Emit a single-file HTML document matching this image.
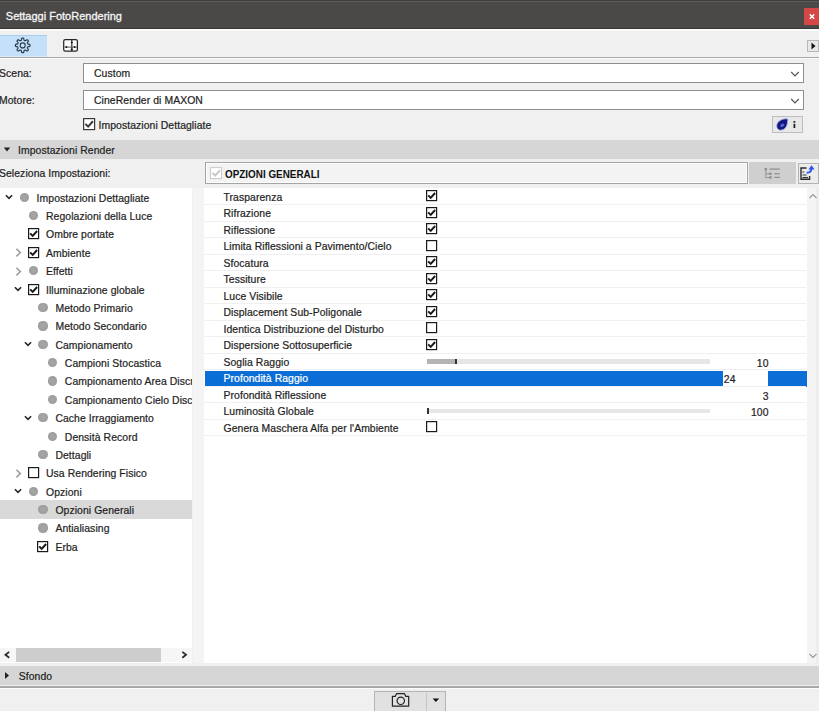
<!DOCTYPE html>
<html><head><meta charset="utf-8"><style>
html,body{margin:0;padding:0;}
body{width:819px;height:711px;overflow:hidden;position:relative;background:#f0f0f0;font-family:"Liberation Sans",sans-serif;}
.t{position:absolute;white-space:nowrap;-webkit-text-stroke:0.22px currentColor;}
</style></head><body>
<div style="position:absolute;left:0px;top:0px;width:819px;height:29px;background:#4b4947"></div>
<div style="position:absolute;left:0px;top:0px;width:819px;height:1px;background:#3f3d3b"></div>
<div style="position:absolute;left:0px;top:1px;width:819px;height:1px;background:#5e5c5a"></div>
<div style="position:absolute;left:0px;top:28px;width:819px;height:1px;background:#393735"></div>
<div class="t" style="left:5.8px;top:9.96px;font-size:11px;line-height:12.65px;color:#f6f6f6;font-weight:normal;letter-spacing:0.08px;letter-spacing:0;-webkit-text-stroke:0.3px #f6f6f6">Settaggi FotoRendering</div>
<div style="position:absolute;left:804px;top:8px;width:15px;height:17px;background:#d44747"></div>
<svg style="position:absolute;left:804px;top:8px" width="15" height="17"><path d="M5.8,6.4 L10.2,10.8 M10.2,6.4 L5.8,10.8" stroke="#fff" stroke-width="1.5"/></svg>
<div style="position:absolute;left:0px;top:29px;width:819px;height:2px;background:#fbfbfb"></div>
<div style="position:absolute;left:0px;top:35px;width:46.5px;height:21px;background:#c5e1f9"></div>
<div style="position:absolute;left:0px;top:35px;width:46.5px;height:1px;background:#a9cdec"></div>
<div style="position:absolute;left:0px;top:55.5px;width:46.5px;height:1px;background:#dce9f3"></div>
<svg style="position:absolute;left:0;top:0" width="100" height="70"><path d="M22.70,38.10 L22.99,38.11 L23.27,38.16 L23.54,38.27 L23.78,38.60 L23.92,39.27 L24.01,39.94 L24.15,40.28 L24.32,40.42 L24.50,40.52 L24.69,40.60 L24.88,40.67 L25.08,40.74 L25.30,40.75 L25.63,40.61 L26.17,40.20 L26.75,39.83 L27.14,39.77 L27.42,39.87 L27.65,40.04 L27.86,40.24 L28.06,40.45 L28.23,40.68 L28.33,40.96 L28.27,41.35 L27.90,41.93 L27.49,42.47 L27.35,42.80 L27.36,43.02 L27.43,43.22 L27.50,43.41 L27.58,43.60 L27.68,43.78 L27.82,43.95 L28.16,44.09 L28.83,44.18 L29.50,44.32 L29.83,44.56 L29.94,44.83 L29.99,45.11 L30.00,45.40 L29.99,45.69 L29.94,45.97 L29.83,46.24 L29.50,46.48 L28.83,46.62 L28.16,46.71 L27.82,46.85 L27.68,47.02 L27.58,47.20 L27.50,47.39 L27.43,47.58 L27.36,47.78 L27.35,48.00 L27.49,48.33 L27.90,48.87 L28.27,49.45 L28.33,49.84 L28.23,50.12 L28.06,50.35 L27.86,50.56 L27.65,50.76 L27.42,50.93 L27.14,51.03 L26.75,50.97 L26.17,50.60 L25.63,50.19 L25.30,50.05 L25.08,50.06 L24.88,50.13 L24.69,50.20 L24.50,50.28 L24.32,50.38 L24.15,50.52 L24.01,50.86 L23.92,51.53 L23.78,52.20 L23.54,52.53 L23.27,52.64 L22.99,52.69 L22.70,52.70 L22.41,52.69 L22.13,52.64 L21.86,52.53 L21.62,52.20 L21.48,51.53 L21.39,50.86 L21.25,50.52 L21.08,50.38 L20.90,50.28 L20.71,50.20 L20.52,50.13 L20.32,50.06 L20.10,50.05 L19.77,50.19 L19.23,50.60 L18.65,50.97 L18.26,51.03 L17.98,50.93 L17.75,50.76 L17.54,50.56 L17.34,50.35 L17.17,50.12 L17.07,49.84 L17.13,49.45 L17.50,48.87 L17.91,48.33 L18.05,48.00 L18.04,47.78 L17.97,47.58 L17.90,47.39 L17.82,47.20 L17.72,47.02 L17.58,46.85 L17.24,46.71 L16.57,46.62 L15.90,46.48 L15.57,46.24 L15.46,45.97 L15.41,45.69 L15.40,45.40 L15.41,45.11 L15.46,44.83 L15.57,44.56 L15.90,44.32 L16.57,44.18 L17.24,44.09 L17.58,43.95 L17.72,43.78 L17.82,43.60 L17.90,43.41 L17.97,43.22 L18.04,43.02 L18.05,42.80 L17.91,42.47 L17.50,41.93 L17.13,41.35 L17.07,40.96 L17.17,40.68 L17.34,40.45 L17.54,40.24 L17.75,40.04 L17.98,39.87 L18.26,39.77 L18.65,39.83 L19.23,40.20 L19.77,40.61 L20.10,40.75 L20.32,40.74 L20.52,40.67 L20.71,40.60 L20.90,40.52 L21.08,40.42 L21.25,40.28 L21.39,39.94 L21.48,39.27 L21.62,38.60 L21.86,38.27 L22.13,38.16 L22.41,38.11Z" fill="none" stroke="#2b3b4c" stroke-width="1.2" stroke-linejoin="round"/><circle cx="22.7" cy="45.4" r="2.5" fill="none" stroke="#2b3b4c" stroke-width="1.15"/><rect x="63.7" y="39.7" width="13.7" height="11.5" rx="1.6" fill="#fafafa" stroke="#262626" stroke-width="1.25"/><line x1="71.8" y1="40" x2="71.8" y2="51" stroke="#333" stroke-width="1.25"/><line x1="64.5" y1="47.1" x2="77" y2="47.1" stroke="#5a5a5a" stroke-width="1"/><ellipse cx="71.8" cy="42.5" rx="1.1" ry="0.8" fill="#111"/><ellipse cx="71.8" cy="49.4" rx="1.1" ry="0.8" fill="#111"/><ellipse cx="66.4" cy="47.1" rx="0.9" ry="1" fill="#111"/><ellipse cx="74.6" cy="47.1" rx="0.9" ry="1" fill="#111"/></svg>
<div style="position:absolute;left:807px;top:40px;width:12px;height:11.5px;background:#e8e8e8;border:1px solid #b8b8b8;box-sizing:border-box"></div>
<svg style="position:absolute;left:807px;top:40px" width="12" height="12"><path d="M4.5,2.5 L8.5,6 L4.5,9.5Z" fill="#111"/></svg>
<div style="position:absolute;left:0px;top:57px;width:819px;height:1px;background:#a9a9a9"></div>
<div style="position:absolute;left:0px;top:58px;width:819px;height:1px;background:#fafafa"></div>
<div class="t" style="left:-1px;top:68.32px;font-size:10.4px;line-height:11.96px;color:#1f1f1f;font-weight:normal;letter-spacing:0.08px;">Scena:</div>
<div style="position:absolute;left:83px;top:63px;width:720.5px;height:20px;background:#fff;border:1px solid #8e8e8e;box-sizing:border-box"></div>
<div class="t" style="left:94px;top:68.32px;font-size:10.4px;line-height:11.96px;color:#1f1f1f;font-weight:normal;letter-spacing:0.08px;">Custom</div>
<div class="t" style="left:-1px;top:95.32px;font-size:10.4px;line-height:11.96px;color:#1f1f1f;font-weight:normal;letter-spacing:0.08px;">Motore:</div>
<div style="position:absolute;left:83px;top:90px;width:720.5px;height:20px;background:#fff;border:1px solid #8e8e8e;box-sizing:border-box"></div>
<div class="t" style="left:94px;top:95.32px;font-size:10.4px;line-height:11.96px;color:#1f1f1f;font-weight:normal;letter-spacing:0.08px;">CineRender di MAXON</div>
<svg style="position:absolute;left:789.3px;top:70.3px" width="12" height="8"><path d="M2.2,2 L6,5.8 L9.8,2" fill="none" stroke="#555" stroke-width="1.2"/></svg>
<svg style="position:absolute;left:789.3px;top:97px" width="12" height="8"><path d="M2.2,2 L6,5.8 L9.8,2" fill="none" stroke="#555" stroke-width="1.2"/></svg>
<svg style="position:absolute;left:83.3px;top:117.5px" width="13" height="13"><rect x="0.6" y="0.6" width="11" height="11" fill="#fff" stroke="#3a3a3a" stroke-width="1.2"/><path d="M2.40,5.89 L5.13,8.62 L9.93,3.27" fill="none" stroke="#3a3a3a" stroke-width="2"/></svg>
<div class="t" style="left:98.5px;top:120.02px;font-size:10.4px;line-height:11.96px;color:#1f1f1f;font-weight:normal;letter-spacing:0.08px;">Impostazioni Dettagliate</div>
<div style="position:absolute;left:772px;top:115.6px;width:30.5px;height:17px;background:#e8e8e8;border:1px solid #bdbdbd;box-sizing:border-box"></div>
<svg style="position:absolute;left:772px;top:115px" width="31" height="18"><path d="M16,4.2 C13,3.2 8.2,4.3 5.6,7.8 C3.6,10.8 5,15.2 8.6,15.2 C12.2,15.2 14.6,12.2 15.2,9.2 C15.5,7.4 15.7,5.8 16,4.2 Z" fill="#13177f" stroke="#a9b3ea" stroke-width="0.9"/><ellipse cx="10.3" cy="10.3" rx="2.2" ry="1.5" fill="#5666cc" transform="rotate(-30 10.3 10.3)"/><rect x="21.5" y="8.8" width="1.8" height="4.2" fill="#222"/><rect x="21.5" y="6" width="1.8" height="1.7" fill="#222"/></svg>
<div style="position:absolute;left:0px;top:140px;width:819px;height:19px;background:#d6d6d6"></div>
<svg style="position:absolute;left:0;top:140px" width="14" height="19"><path d="M3.8,7.6 L10.2,7.6 L7,11.6Z" fill="#222"/></svg>
<div class="t" style="left:18px;top:145.22px;font-size:10.4px;line-height:11.96px;color:#1f1f1f;font-weight:normal;letter-spacing:0.08px;">Impostazioni Render</div>
<div class="t" style="left:-1px;top:168.32px;font-size:10.4px;line-height:11.96px;color:#1f1f1f;font-weight:normal;letter-spacing:0.08px;">Seleziona Impostazioni:</div>
<div style="position:absolute;left:0px;top:188px;width:191.5px;height:475px;background:#fff"></div>
<div style="position:absolute;left:0;top:0;width:191.5px;height:663px;overflow:hidden">
<div style="position:absolute;left:0px;top:500.29px;width:192px;height:18.37px;background:#d9d9d9"></div>
<svg style="position:absolute;left:4.10px;top:192.20px" width="10" height="10"><path d="M1.9,3.3 L5,6.4 L8.1,3.3" fill="none" stroke="#262626" stroke-width="1.6"/></svg>
<div style="position:absolute;left:19.75px;top:192.70px;width:9.3px;height:9.3px;border-radius:50%;background:radial-gradient(circle,#a6a6a6 0,#a2a2a2 40%,#949494 100%)"></div>
<div class="t" style="left:36.6px;top:192.72px;font-size:10.4px;line-height:11.96px;color:#1f1f1f;font-weight:normal;letter-spacing:0.08px;">Impostazioni Dettagliate</div>
<div style="position:absolute;left:29.05px;top:211.07px;width:9.3px;height:9.3px;border-radius:50%;background:radial-gradient(circle,#a6a6a6 0,#a2a2a2 40%,#949494 100%)"></div>
<div class="t" style="left:46.0px;top:211.09px;font-size:10.4px;line-height:11.96px;color:#1f1f1f;font-weight:normal;letter-spacing:0.08px;">Regolazioni della Luce</div>
<svg style="position:absolute;left:28.0px;top:228.4px" width="12" height="12"><rect x="0.6" y="0.6" width="10" height="10" fill="#fff" stroke="#1a1a1a" stroke-width="1.2"/><path d="M2.20,5.40 L4.70,7.90 L9.10,3.00" fill="none" stroke="#1a1a1a" stroke-width="2"/></svg>
<div class="t" style="left:46.0px;top:229.46px;font-size:10.4px;line-height:11.96px;color:#1f1f1f;font-weight:normal;letter-spacing:0.08px;">Ombre portate</div>
<svg style="position:absolute;left:14.20px;top:247.31px" width="10" height="10"><path d="M2.4,1.8 L6.4,5.6 L2.4,9.4" fill="none" stroke="#9c9c9c" stroke-width="1.5"/></svg>
<svg style="position:absolute;left:28.0px;top:246.8px" width="12" height="12"><rect x="0.6" y="0.6" width="10" height="10" fill="#fff" stroke="#1a1a1a" stroke-width="1.2"/><path d="M2.20,5.40 L4.70,7.90 L9.10,3.00" fill="none" stroke="#1a1a1a" stroke-width="2"/></svg>
<div class="t" style="left:46.0px;top:247.83px;font-size:10.4px;line-height:11.96px;color:#1f1f1f;font-weight:normal;letter-spacing:0.08px;">Ambiente</div>
<svg style="position:absolute;left:14.20px;top:265.68px" width="10" height="10"><path d="M2.4,1.8 L6.4,5.6 L2.4,9.4" fill="none" stroke="#9c9c9c" stroke-width="1.5"/></svg>
<div style="position:absolute;left:29.05px;top:266.18px;width:9.3px;height:9.3px;border-radius:50%;background:radial-gradient(circle,#a6a6a6 0,#a2a2a2 40%,#949494 100%)"></div>
<div class="t" style="left:46.0px;top:266.20px;font-size:10.4px;line-height:11.96px;color:#1f1f1f;font-weight:normal;letter-spacing:0.08px;">Effetti</div>
<svg style="position:absolute;left:13.40px;top:284.05px" width="10" height="10"><path d="M1.9,3.3 L5,6.4 L8.1,3.3" fill="none" stroke="#262626" stroke-width="1.6"/></svg>
<svg style="position:absolute;left:28.0px;top:283.6px" width="12" height="12"><rect x="0.6" y="0.6" width="10" height="10" fill="#fff" stroke="#1a1a1a" stroke-width="1.2"/><path d="M2.20,5.40 L4.70,7.90 L9.10,3.00" fill="none" stroke="#1a1a1a" stroke-width="2"/></svg>
<div class="t" style="left:46.0px;top:284.57px;font-size:10.4px;line-height:11.96px;color:#1f1f1f;font-weight:normal;letter-spacing:0.08px;">Illuminazione globale</div>
<div style="position:absolute;left:38.35px;top:302.92px;width:9.3px;height:9.3px;border-radius:50%;background:radial-gradient(circle,#a6a6a6 0,#a2a2a2 40%,#949494 100%)"></div>
<div class="t" style="left:55.400000000000006px;top:302.94px;font-size:10.4px;line-height:11.96px;color:#1f1f1f;font-weight:normal;letter-spacing:0.08px;">Metodo Primario</div>
<div style="position:absolute;left:38.35px;top:321.29px;width:9.3px;height:9.3px;border-radius:50%;background:radial-gradient(circle,#a6a6a6 0,#a2a2a2 40%,#949494 100%)"></div>
<div class="t" style="left:55.400000000000006px;top:321.31px;font-size:10.4px;line-height:11.96px;color:#1f1f1f;font-weight:normal;letter-spacing:0.08px;">Metodo Secondario</div>
<svg style="position:absolute;left:22.70px;top:339.16px" width="10" height="10"><path d="M1.9,3.3 L5,6.4 L8.1,3.3" fill="none" stroke="#262626" stroke-width="1.6"/></svg>
<div style="position:absolute;left:38.35px;top:339.66px;width:9.3px;height:9.3px;border-radius:50%;background:radial-gradient(circle,#a6a6a6 0,#a2a2a2 40%,#949494 100%)"></div>
<div class="t" style="left:55.400000000000006px;top:339.68px;font-size:10.4px;line-height:11.96px;color:#1f1f1f;font-weight:normal;letter-spacing:0.08px;">Campionamento</div>
<div style="position:absolute;left:47.65px;top:358.03px;width:9.3px;height:9.3px;border-radius:50%;background:radial-gradient(circle,#a6a6a6 0,#a2a2a2 40%,#949494 100%)"></div>
<div class="t" style="left:64.80000000000001px;top:358.05px;font-size:10.4px;line-height:11.96px;color:#1f1f1f;font-weight:normal;letter-spacing:0.08px;">Campioni Stocastica</div>
<div style="position:absolute;left:47.65px;top:376.40px;width:9.3px;height:9.3px;border-radius:50%;background:radial-gradient(circle,#a6a6a6 0,#a2a2a2 40%,#949494 100%)"></div>
<div class="t" style="left:64.80000000000001px;top:376.42px;font-size:10.4px;line-height:11.96px;color:#1f1f1f;font-weight:normal;letter-spacing:0.08px;">Campionamento Area Discr</div>
<div style="position:absolute;left:47.65px;top:394.77px;width:9.3px;height:9.3px;border-radius:50%;background:radial-gradient(circle,#a6a6a6 0,#a2a2a2 40%,#949494 100%)"></div>
<div class="t" style="left:64.80000000000001px;top:394.79px;font-size:10.4px;line-height:11.96px;color:#1f1f1f;font-weight:normal;letter-spacing:0.08px;">Campionamento Cielo Disc</div>
<svg style="position:absolute;left:22.70px;top:412.64px" width="10" height="10"><path d="M1.9,3.3 L5,6.4 L8.1,3.3" fill="none" stroke="#262626" stroke-width="1.6"/></svg>
<div style="position:absolute;left:38.35px;top:413.14px;width:9.3px;height:9.3px;border-radius:50%;background:radial-gradient(circle,#a6a6a6 0,#a2a2a2 40%,#949494 100%)"></div>
<div class="t" style="left:55.400000000000006px;top:413.16px;font-size:10.4px;line-height:11.96px;color:#1f1f1f;font-weight:normal;letter-spacing:0.08px;">Cache Irraggiamento</div>
<div style="position:absolute;left:47.65px;top:431.51px;width:9.3px;height:9.3px;border-radius:50%;background:radial-gradient(circle,#a6a6a6 0,#a2a2a2 40%,#949494 100%)"></div>
<div class="t" style="left:64.80000000000001px;top:431.53px;font-size:10.4px;line-height:11.96px;color:#1f1f1f;font-weight:normal;letter-spacing:0.08px;">Densità Record</div>
<div style="position:absolute;left:38.35px;top:449.88px;width:9.3px;height:9.3px;border-radius:50%;background:radial-gradient(circle,#a6a6a6 0,#a2a2a2 40%,#949494 100%)"></div>
<div class="t" style="left:55.400000000000006px;top:449.90px;font-size:10.4px;line-height:11.96px;color:#1f1f1f;font-weight:normal;letter-spacing:0.08px;">Dettagli</div>
<svg style="position:absolute;left:14.20px;top:467.75px" width="10" height="10"><path d="M2.4,1.8 L6.4,5.6 L2.4,9.4" fill="none" stroke="#9c9c9c" stroke-width="1.5"/></svg>
<svg style="position:absolute;left:28.0px;top:467.2px" width="12" height="12"><rect x="0.6" y="0.6" width="10" height="10" fill="#fff" stroke="#1a1a1a" stroke-width="1.2"/></svg>
<div class="t" style="left:46.0px;top:468.27px;font-size:10.4px;line-height:11.96px;color:#1f1f1f;font-weight:normal;letter-spacing:0.08px;">Usa Rendering Fisico</div>
<svg style="position:absolute;left:13.40px;top:486.12px" width="10" height="10"><path d="M1.9,3.3 L5,6.4 L8.1,3.3" fill="none" stroke="#262626" stroke-width="1.6"/></svg>
<div style="position:absolute;left:29.05px;top:486.62px;width:9.3px;height:9.3px;border-radius:50%;background:radial-gradient(circle,#a6a6a6 0,#a2a2a2 40%,#949494 100%)"></div>
<div class="t" style="left:46.0px;top:486.64px;font-size:10.4px;line-height:11.96px;color:#1f1f1f;font-weight:normal;letter-spacing:0.08px;">Opzioni</div>
<div style="position:absolute;left:38.35px;top:504.99px;width:9.3px;height:9.3px;border-radius:50%;background:radial-gradient(circle,#a6a6a6 0,#a2a2a2 40%,#949494 100%)"></div>
<div class="t" style="left:55.400000000000006px;top:505.01px;font-size:10.4px;line-height:11.96px;color:#1f1f1f;font-weight:normal;letter-spacing:0.08px;">Opzioni Generali</div>
<div style="position:absolute;left:38.35px;top:523.36px;width:9.3px;height:9.3px;border-radius:50%;background:radial-gradient(circle,#a6a6a6 0,#a2a2a2 40%,#949494 100%)"></div>
<div class="t" style="left:55.400000000000006px;top:523.38px;font-size:10.4px;line-height:11.96px;color:#1f1f1f;font-weight:normal;letter-spacing:0.08px;">Antialiasing</div>
<svg style="position:absolute;left:37.3px;top:540.7px" width="12" height="12"><rect x="0.6" y="0.6" width="10" height="10" fill="#fff" stroke="#1a1a1a" stroke-width="1.2"/><path d="M2.20,5.40 L4.70,7.90 L9.10,3.00" fill="none" stroke="#1a1a1a" stroke-width="2"/></svg>
<div class="t" style="left:55.400000000000006px;top:541.75px;font-size:10.4px;line-height:11.96px;color:#1f1f1f;font-weight:normal;letter-spacing:0.08px;">Erba</div>
<div style="position:absolute;left:0px;top:648px;width:191.5px;height:13.6px;background:#f6f6f6"></div>
<div style="position:absolute;left:15.5px;top:648px;width:145px;height:13.6px;background:#cdcdcd"></div>
<svg style="position:absolute;left:0;top:648px" width="192" height="14"><path d="M9.2,3.9 L5.4,6.8 L9.2,9.7" fill="none" stroke="#2a2a2a" stroke-width="1.7"/><path d="M182.3,3.9 L186.1,6.8 L182.3,9.7" fill="none" stroke="#2a2a2a" stroke-width="1.7"/></svg>
</div>
<div style="position:absolute;left:205px;top:162px;width:543px;height:22px;background:#f3f3f3;border:1px solid #a4a4a4;box-sizing:border-box;box-shadow:inset 0 0 0 1px #fff"></div>
<svg style="position:absolute;left:209.5px;top:167.2px" width="13" height="13"><rect x="0.6" y="0.6" width="11" height="11" fill="#fff" stroke="#c8c8c8" stroke-width="1"/><path d="M2.40,5.89 L5.13,8.62 L9.93,3.27" fill="none" stroke="#c8c8c8" stroke-width="2"/></svg>
<div class="t" style="left:224.5px;top:168.24px;font-size:10.7px;line-height:12.305px;color:#111;font-weight:bold;letter-spacing:0.08px;letter-spacing:0;-webkit-text-stroke:0;transform:scaleX(0.925);transform-origin:0 0">OPZIONI GENERALI</div>
<div style="position:absolute;left:749px;top:162px;width:46.5px;height:22px;background:#cfcfcf"></div>
<svg style="position:absolute;left:749px;top:162px" width="47" height="22"><g fill="#8e8e8e"><rect x="15.6" y="6" width="2.4" height="2.4"/><rect x="20.5" y="6.5" width="10.3" height="1.2"/><rect x="16.4" y="8.2" width="0.9" height="8.3"/><rect x="17.2" y="11.4" width="3" height="0.9"/><rect x="17.2" y="15" width="3" height="0.9"/><rect x="20.2" y="10.6" width="2.4" height="2.4"/><rect x="20.2" y="14.2" width="2.4" height="2.4"/><rect x="25.4" y="11.2" width="5.4" height="1.2"/><rect x="25.4" y="14.8" width="5.4" height="1.2"/></g></svg>
<div style="position:absolute;left:798px;top:162.5px;width:20.5px;height:21px;background:#ececec;border:1px solid #b4b4b4;box-sizing:border-box"></div>
<svg style="position:absolute;left:798px;top:162px" width="21" height="22"><path d="M8.5,6 L3,6 L3,17.3 L11.6,17.3 L11.6,14" fill="none" stroke="#2a2a2a" stroke-width="1.4"/><line x1="4.5" y1="10" x2="6.2" y2="10" stroke="#333" stroke-width="1.1"/><line x1="4.5" y1="13" x2="8.5" y2="13" stroke="#444" stroke-width="1.1"/><line x1="4.5" y1="15.5" x2="10" y2="15.5" stroke="#333" stroke-width="1.1"/><path d="M8.6,10.8 Q13.2,10.8 13.5,6.5" fill="none" stroke="#2f55e6" stroke-width="1.9"/><path d="M10.4,7.6 L13.5,3.2 L16.6,7.6 Z" fill="#2f55e6"/></svg>
<div style="position:absolute;left:193px;top:188px;width:10.5px;height:475px;background:#f4f4f4"></div>
<div style="position:absolute;left:204px;top:188px;width:603px;height:475px;background:#fff"></div>
<div style="position:absolute;left:807px;top:188px;width:12px;height:475px;background:#f4f4f4"></div>
<div style="position:absolute;left:816px;top:188px;width:3px;height:475px;background:#ededed"></div>
<svg style="position:absolute;left:807px;top:190px" width="12" height="12"><path d="M2.5,8 L6,4.5 L9.5,8" fill="none" stroke="#9a9a9a" stroke-width="1.2"/></svg>
<svg style="position:absolute;left:807px;top:650px" width="12" height="12"><path d="M2.5,4 L6,7.5 L9.5,4" fill="none" stroke="#9a9a9a" stroke-width="1.2"/></svg>
<div class="t" style="left:223.5px;top:191.82px;font-size:10.4px;line-height:11.96px;color:#1f1f1f;font-weight:normal;letter-spacing:0.08px;">Trasparenza</div>
<svg style="position:absolute;left:426px;top:190.1px" width="12" height="12"><rect x="0.6" y="0.6" width="10" height="10" fill="#fff" stroke="#1a1a1a" stroke-width="1.2"/><path d="M2.20,5.40 L4.70,7.90 L9.10,3.00" fill="none" stroke="#1a1a1a" stroke-width="2"/></svg>
<div style="position:absolute;left:204px;top:204px;width:602px;height:1px;background:#f0f0f0"></div>
<div class="t" style="left:223.5px;top:208.32px;font-size:10.4px;line-height:11.96px;color:#1f1f1f;font-weight:normal;letter-spacing:0.08px;">Rifrazione</div>
<svg style="position:absolute;left:426px;top:206.6px" width="12" height="12"><rect x="0.6" y="0.6" width="10" height="10" fill="#fff" stroke="#1a1a1a" stroke-width="1.2"/><path d="M2.20,5.40 L4.70,7.90 L9.10,3.00" fill="none" stroke="#1a1a1a" stroke-width="2"/></svg>
<div style="position:absolute;left:204px;top:221px;width:602px;height:1px;background:#f0f0f0"></div>
<div class="t" style="left:223.5px;top:224.82px;font-size:10.4px;line-height:11.96px;color:#1f1f1f;font-weight:normal;letter-spacing:0.08px;">Riflessione</div>
<svg style="position:absolute;left:426px;top:223.1px" width="12" height="12"><rect x="0.6" y="0.6" width="10" height="10" fill="#fff" stroke="#1a1a1a" stroke-width="1.2"/><path d="M2.20,5.40 L4.70,7.90 L9.10,3.00" fill="none" stroke="#1a1a1a" stroke-width="2"/></svg>
<div style="position:absolute;left:204px;top:237px;width:602px;height:1px;background:#f0f0f0"></div>
<div class="t" style="left:223.5px;top:241.32px;font-size:10.4px;line-height:11.96px;color:#1f1f1f;font-weight:normal;letter-spacing:0.08px;">Limita Riflessioni a Pavimento/Cielo</div>
<svg style="position:absolute;left:426px;top:239.6px" width="12" height="12"><rect x="0.6" y="0.6" width="10" height="10" fill="#fff" stroke="#1a1a1a" stroke-width="1.2"/></svg>
<div style="position:absolute;left:204px;top:254px;width:602px;height:1px;background:#f0f0f0"></div>
<div class="t" style="left:223.5px;top:257.82px;font-size:10.4px;line-height:11.96px;color:#1f1f1f;font-weight:normal;letter-spacing:0.08px;">Sfocatura</div>
<svg style="position:absolute;left:426px;top:256.1px" width="12" height="12"><rect x="0.6" y="0.6" width="10" height="10" fill="#fff" stroke="#1a1a1a" stroke-width="1.2"/><path d="M2.20,5.40 L4.70,7.90 L9.10,3.00" fill="none" stroke="#1a1a1a" stroke-width="2"/></svg>
<div style="position:absolute;left:204px;top:270px;width:602px;height:1px;background:#f0f0f0"></div>
<div class="t" style="left:223.5px;top:274.32px;font-size:10.4px;line-height:11.96px;color:#1f1f1f;font-weight:normal;letter-spacing:0.08px;">Tessiture</div>
<svg style="position:absolute;left:426px;top:272.6px" width="12" height="12"><rect x="0.6" y="0.6" width="10" height="10" fill="#fff" stroke="#1a1a1a" stroke-width="1.2"/><path d="M2.20,5.40 L4.70,7.90 L9.10,3.00" fill="none" stroke="#1a1a1a" stroke-width="2"/></svg>
<div style="position:absolute;left:204px;top:287px;width:602px;height:1px;background:#f0f0f0"></div>
<div class="t" style="left:223.5px;top:290.82px;font-size:10.4px;line-height:11.96px;color:#1f1f1f;font-weight:normal;letter-spacing:0.08px;">Luce Visibile</div>
<svg style="position:absolute;left:426px;top:289.1px" width="12" height="12"><rect x="0.6" y="0.6" width="10" height="10" fill="#fff" stroke="#1a1a1a" stroke-width="1.2"/><path d="M2.20,5.40 L4.70,7.90 L9.10,3.00" fill="none" stroke="#1a1a1a" stroke-width="2"/></svg>
<div style="position:absolute;left:204px;top:303px;width:602px;height:1px;background:#f0f0f0"></div>
<div class="t" style="left:223.5px;top:307.32px;font-size:10.4px;line-height:11.96px;color:#1f1f1f;font-weight:normal;letter-spacing:0.08px;">Displacement Sub-Poligonale</div>
<svg style="position:absolute;left:426px;top:305.6px" width="12" height="12"><rect x="0.6" y="0.6" width="10" height="10" fill="#fff" stroke="#1a1a1a" stroke-width="1.2"/><path d="M2.20,5.40 L4.70,7.90 L9.10,3.00" fill="none" stroke="#1a1a1a" stroke-width="2"/></svg>
<div style="position:absolute;left:204px;top:320px;width:602px;height:1px;background:#f0f0f0"></div>
<div class="t" style="left:223.5px;top:323.82px;font-size:10.4px;line-height:11.96px;color:#1f1f1f;font-weight:normal;letter-spacing:0.08px;">Identica Distribuzione del Disturbo</div>
<svg style="position:absolute;left:426px;top:322.1px" width="12" height="12"><rect x="0.6" y="0.6" width="10" height="10" fill="#fff" stroke="#1a1a1a" stroke-width="1.2"/></svg>
<div style="position:absolute;left:204px;top:336px;width:602px;height:1px;background:#f0f0f0"></div>
<div class="t" style="left:223.5px;top:340.32px;font-size:10.4px;line-height:11.96px;color:#1f1f1f;font-weight:normal;letter-spacing:0.08px;">Dispersione Sottosuperficie</div>
<svg style="position:absolute;left:426px;top:338.6px" width="12" height="12"><rect x="0.6" y="0.6" width="10" height="10" fill="#fff" stroke="#1a1a1a" stroke-width="1.2"/><path d="M2.20,5.40 L4.70,7.90 L9.10,3.00" fill="none" stroke="#1a1a1a" stroke-width="2"/></svg>
<div style="position:absolute;left:204px;top:353px;width:602px;height:1px;background:#f0f0f0"></div>
<div class="t" style="left:223.5px;top:356.82px;font-size:10.4px;line-height:11.96px;color:#1f1f1f;font-weight:normal;letter-spacing:0.08px;">Soglia Raggio</div>
<div style="position:absolute;left:427.2px;top:359.0px;width:282.5px;height:4.5px;background:#e6e6e6"></div>
<div style="position:absolute;left:427.2px;top:359.0px;width:28px;height:4.5px;background:#b4b4b4"></div>
<div style="position:absolute;left:454.5px;top:358.5px;width:2px;height:5.5px;background:#333"></div>
<div class="t" style="left:768.5px;top:357.62px;font-size:10.4px;line-height:11.96px;color:#1f1f1f;font-weight:normal;letter-spacing:0.08px;transform:translateX(-100%)">10</div>
<div style="position:absolute;left:204px;top:369px;width:602px;height:1px;background:#f0f0f0"></div>
<div style="position:absolute;left:205px;top:371.0px;width:517.5px;height:15.5px;background:#0a6ed6"></div>
<div style="position:absolute;left:768px;top:371.0px;width:38.5px;height:15.5px;background:#0a6ed6"></div>
<div class="t" style="left:223.5px;top:373.32px;font-size:10.4px;line-height:11.96px;color:#fff;font-weight:normal;letter-spacing:0.08px;">Profondità Raggio</div>
<div class="t" style="left:723.8px;top:374.32px;font-size:10.4px;line-height:11.96px;color:#1f1f1f;font-weight:normal;letter-spacing:0.08px;">24</div>
<div style="position:absolute;left:204px;top:386px;width:602px;height:1px;background:#f0f0f0"></div>
<div class="t" style="left:223.5px;top:389.82px;font-size:10.4px;line-height:11.96px;color:#1f1f1f;font-weight:normal;letter-spacing:0.08px;">Profondità Riflessione</div>
<div class="t" style="left:768.5px;top:390.62px;font-size:10.4px;line-height:11.96px;color:#1f1f1f;font-weight:normal;letter-spacing:0.08px;transform:translateX(-100%)">3</div>
<div style="position:absolute;left:204px;top:402px;width:602px;height:1px;background:#f0f0f0"></div>
<div class="t" style="left:223.5px;top:406.32px;font-size:10.4px;line-height:11.96px;color:#1f1f1f;font-weight:normal;letter-spacing:0.08px;">Luminosità Globale</div>
<div style="position:absolute;left:427.2px;top:408.5px;width:282.5px;height:4.5px;background:#e6e6e6"></div>
<div style="position:absolute;left:427px;top:408.0px;width:2px;height:5.5px;background:#333"></div>
<div class="t" style="left:768.5px;top:407.12px;font-size:10.4px;line-height:11.96px;color:#1f1f1f;font-weight:normal;letter-spacing:0.08px;transform:translateX(-100%)">100</div>
<div style="position:absolute;left:204px;top:419px;width:602px;height:1px;background:#f0f0f0"></div>
<div class="t" style="left:223.5px;top:422.82px;font-size:10.4px;line-height:11.96px;color:#1f1f1f;font-weight:normal;letter-spacing:0.08px;">Genera Maschera Alfa per l'Ambiente</div>
<svg style="position:absolute;left:426px;top:421.1px" width="12" height="12"><rect x="0.6" y="0.6" width="10" height="10" fill="#fff" stroke="#1a1a1a" stroke-width="1.2"/></svg>
<div style="position:absolute;left:204px;top:435px;width:602px;height:1px;background:#f0f0f0"></div>
<div style="position:absolute;left:0px;top:666.3px;width:819px;height:18.5px;background:#d6d6d6"></div>
<svg style="position:absolute;left:0;top:666px" width="14" height="19"><path d="M5,6 L9,9.5 L5,13Z" fill="#222"/></svg>
<div class="t" style="left:18.7px;top:670.92px;font-size:10.4px;line-height:11.96px;color:#1f1f1f;font-weight:normal;letter-spacing:0.08px;">Sfondo</div>
<div style="position:absolute;left:0px;top:686.3px;width:819px;height:1.5px;background:#a8a8a8"></div>
<div style="position:absolute;left:0px;top:687.8px;width:819px;height:1px;background:#fbfbfb"></div>
<div style="position:absolute;left:374px;top:691.3px;width:72px;height:25px;background:#e1e1e1;border:1px solid #b4b4b4;box-sizing:border-box"></div>
<div style="position:absolute;left:426px;top:693px;width:1px;height:20px;background:#c4c4c4"></div>
<svg style="position:absolute;left:374px;top:691px" width="72" height="20"><path d="M18.4,5.4 L21.2,5.4 L22.6,2.6 L30.4,2.6 L31.8,5.4 L34.7,5.4 L34.7,15.2 L18.4,15.2 Z" fill="none" stroke="#222" stroke-width="1.2" stroke-linejoin="round"/><circle cx="26.75" cy="9.8" r="3.7" fill="none" stroke="#222" stroke-width="1.2"/><path d="M58.6,7.6 L65.2,7.6 L61.9,10.9Z" fill="#111"/></svg>
</body></html>
